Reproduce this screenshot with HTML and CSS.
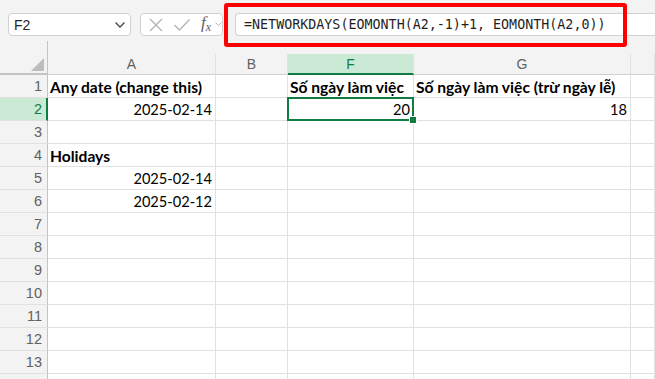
FILE: index.html
```html
<!DOCTYPE html>
<html lang="vi">
<head>
    <meta charset="UTF-8">
    <title>Workbook</title>
    <link rel="stylesheet" href="styles.css">
</head>
<body>
    <div class="app">
        <div class="toolbar">
            <div class="namebox">
                <span>F2</span>
                <svg class="chev" width="12" height="8" viewBox="0 0 12 8"><path d="M1.5 1.5 L6 6 L10.5 1.5" fill="none" stroke="#444" stroke-width="1.3"/></svg>
            </div>
            <div class="fxbox">
                <svg width="16" height="16" viewBox="0 0 16 16"><path d="M2 2 L14 14 M14 2 L2 14" stroke="#b3b3b3" stroke-width="1.3" fill="none"/></svg>
                <svg width="18" height="14" viewBox="0 0 18 14"><path d="M1.5 7 L6.5 12 L16.5 1.5" stroke="#b3b3b3" stroke-width="1.3" fill="none"/></svg>
                <span class="fx">f<sub>x</sub></span>
                <svg width="7" height="5" viewBox="0 0 7 5"><path d="M0.5 0.5 L3.5 3.5 L6.5 0.5" stroke="#b3b3b3" stroke-width="1" fill="none"/></svg>
            </div>
            <div class="formula">=NETWORKDAYS(EOMONTH(A2,-1)+1, EOMONTH(A2,0))</div>
            <div class="callout"></div>
        </div>

        <div class="sheet">
            <div class="corner"><span class="tri"></span></div>
            <div class="colhead">A</div>
            <div class="colhead">B</div>
            <div class="colhead active">F</div>
            <div class="colhead">G</div>
            <div class="colhead"></div>

            <div class="rowhead">1</div>
            <div class="cell bold">Any date (change this)</div>
            <div class="cell"></div>
            <div class="cell bold">Số ngày làm việc</div>
            <div class="cell bold">Số ngày làm việc (trừ ngày lễ)</div>
            <div class="cell"></div>

            <div class="rowhead active">2</div>
            <div class="cell num">2025-02-14</div>
            <div class="cell"></div>
            <div class="cell num selected">20<span class="handle"></span></div>
            <div class="cell num">18</div>
            <div class="cell"></div>

            <div class="rowhead">3</div>
            <div class="cell"></div><div class="cell"></div><div class="cell"></div><div class="cell"></div><div class="cell"></div>

            <div class="rowhead">4</div>
            <div class="cell bold">Holidays</div>
            <div class="cell"></div><div class="cell"></div><div class="cell"></div><div class="cell"></div>

            <div class="rowhead">5</div>
            <div class="cell num">2025-02-14</div>
            <div class="cell"></div><div class="cell"></div><div class="cell"></div><div class="cell"></div>

            <div class="rowhead">6</div>
            <div class="cell num">2025-02-12</div>
            <div class="cell"></div><div class="cell"></div><div class="cell"></div><div class="cell"></div>

            <div class="rowhead">7</div>
            <div class="cell"></div><div class="cell"></div><div class="cell"></div><div class="cell"></div><div class="cell"></div>
            <div class="rowhead">8</div>
            <div class="cell"></div><div class="cell"></div><div class="cell"></div><div class="cell"></div><div class="cell"></div>
            <div class="rowhead">9</div>
            <div class="cell"></div><div class="cell"></div><div class="cell"></div><div class="cell"></div><div class="cell"></div>
            <div class="rowhead">10</div>
            <div class="cell"></div><div class="cell"></div><div class="cell"></div><div class="cell"></div><div class="cell"></div>
            <div class="rowhead">11</div>
            <div class="cell"></div><div class="cell"></div><div class="cell"></div><div class="cell"></div><div class="cell"></div>
            <div class="rowhead">12</div>
            <div class="cell"></div><div class="cell"></div><div class="cell"></div><div class="cell"></div><div class="cell"></div>
            <div class="rowhead">13</div>
            <div class="cell"></div><div class="cell"></div><div class="cell"></div><div class="cell"></div><div class="cell"></div>
            <div class="rowhead"></div>
            <div class="cell"></div><div class="cell"></div><div class="cell"></div><div class="cell"></div><div class="cell"></div>
        </div>
    </div>
</body>
</html>
```

FILE: styles.css
```css
body {
    margin: 0;
    background-color: #fff;
    font-family: "Liberation Sans", Arial, sans-serif;
    overflow: hidden;
}

.app {
    width: 655px;
    height: 379px;
    overflow: hidden;
}

.toolbar {
    position: relative;
    display: flex;
    align-items: flex-start;
    height: 41px;
    padding: 13px 0 0 8px;
    box-sizing: border-box;
    background-color: #f3f3f3;
}

.namebox {
    display: flex;
    align-items: center;
    justify-content: space-between;
    width: 123px;
    height: 23px;
    padding: 0 4px 0 5px;
    box-sizing: border-box;
    background-color: #fff;
    border: 1px solid #d1d1d1;
    border-radius: 4px;
    font-size: 14px;
    color: #242424;
}

.fxbox {
    display: flex;
    align-items: center;
    gap: 9px;
    width: 83px;
    height: 23px;
    margin-left: 9px;
    padding-left: 7px;
    box-sizing: border-box;
    background-color: #fff;
    border: 1px solid #d1d1d1;
    border-radius: 4px;
}

.fx {
    font-family: "Liberation Serif", serif;
    font-style: italic;
    font-size: 17px;
    line-height: 18px;
    color: #616161;
    margin-left: 1px;
    margin-right: -5px;
}

.fx sub {
    font-size: 12px;
    vertical-align: -3px;
}

.formula {
    flex: 1;
    height: 23px;
    margin-left: 12px;
    padding-left: 8px;
    box-sizing: border-box;
    background-color: #fff;
    border: 1px solid #d1d1d1;
    border-right: none;
    border-radius: 4px 0 0 4px;
    font-family: "DejaVu Sans Mono", monospace;
    font-size: 13.35px;
    line-height: 21px;
    color: #1f1f1f;
    white-space: nowrap;
}

.callout {
    position: absolute;
    left: 224px;
    top: 3px;
    width: 403px;
    height: 44px;
    box-sizing: border-box;
    border: 4px solid #ff0000;
    border-radius: 3px;
}

.sheet {
    display: grid;
    grid-template-columns: 48px 168px 72px 126px 217px 1fr;
    grid-template-rows: 34px repeat(14, 23px);
    font-family: "Lato", "Liberation Sans", sans-serif;
    font-size: 15.6px;
    color: #000;
}

.corner {
    position: relative;
    background-color: #f3f3f3;
    border-right: 1px solid #c4c4c4;
    border-bottom: 2px solid #c4c4c4;
    box-sizing: border-box;
}

.tri {
    position: absolute;
    right: 3px;
    bottom: 2px;
    width: 0;
    height: 0;
    border-left: 13px solid transparent;
    border-bottom: 13px solid #bdbdbd;
}

.colhead {
    align-self: end;
    height: 21px;
    box-sizing: border-box;
    margin-top: 13px;
    background-color: #f3f3f3;
    border-right: 1px solid #e1e1e1;
    border-bottom: 1px solid #d0d0d0;
    box-shadow: 0 -13px 0 #f3f3f3;
    text-align: center;
    font-family: "Liberation Sans", Arial, sans-serif;
    font-size: 14px;
    line-height: 20px;
    color: #616161;
}

.colhead.active {
    background-color: #caead6;
    border-bottom: 2px solid #107c41;
    color: #107c41;
}

.rowhead {
    background-color: #f3f3f3;
    border-right: 1px solid #c4c4c4;
    border-bottom: 1px solid #e1e1e1;
    box-sizing: border-box;
    padding-right: 5px;
    text-align: right;
    font-family: "Liberation Sans", Arial, sans-serif;
    font-size: 14.5px;
    line-height: 23px;
    color: #616161;
}

.rowhead.active {
    background-color: #caead6;
    border-right: 2px solid #107c41;
    padding-right: 4px;
    color: #107c41;
}

.cell {
    border-right: 1px solid #e1e1e1;
    border-bottom: 1px solid #e1e1e1;
    box-sizing: border-box;
    padding: 0 3px 0 2px;
    line-height: 24px;
    white-space: nowrap;
}

.bold {
    font-weight: bold;
}

.num {
    text-align: right;
    font-size: 14.6px;
}

.selected {
    position: relative;
}

.selected::after {
    content: "";
    position: absolute;
    left: -1px;
    top: -1px;
    right: -1px;
    bottom: -1px;
    border: 2px solid #107c41;
}

.handle {
    position: absolute;
    right: -4px;
    bottom: -4px;
    width: 6px;
    height: 6px;
    background-color: #107c41;
    border: 1px solid #fff;
    z-index: 1;
}
```
